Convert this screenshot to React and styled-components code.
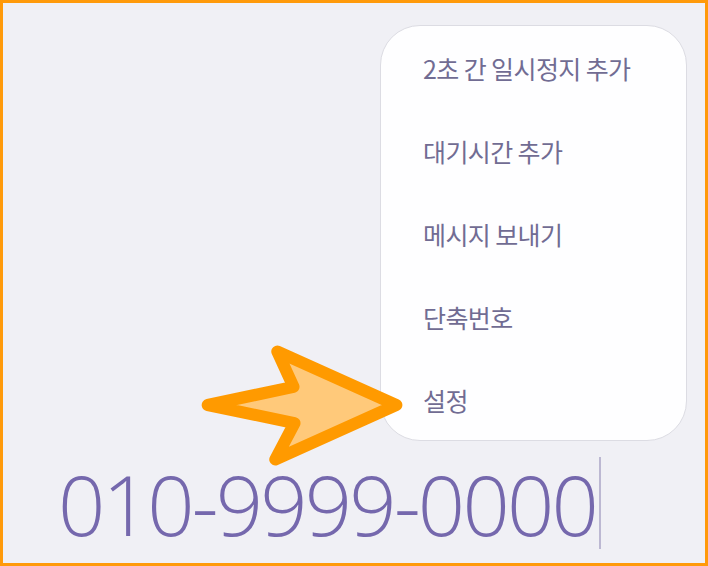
import styled, { createGlobalStyle } from "styled-components";

const Global = createGlobalStyle`
  html, body {
    margin: 0;
    padding: 0;
    background: #f0f0f5;
  }
  * {
    box-sizing: border-box;
  }
`;

const Screen = styled.div`
  position: relative;
  width: 708px;
  height: 566px;
  border: 3px solid #ff9a0a;
  background: #f0f0f5;
  display: flex;
  flex-direction: column;
  overflow: hidden;
`;

const Menu = styled.ul`
  align-self: flex-end;
  margin: 22px 18px 0 0;
  padding: 0;
  width: 307px;
  height: 416px;
  list-style: none;
  background: #fefeff;
  border: 1px solid #dcdce3;
  border-radius: 40px;
`;

const Item = styled.li`
  height: 83px;
  display: flex;
  align-items: center;
  padding-left: 42px;
  font-family: "Noto Sans CJK KR", "Noto Sans", sans-serif;
  font-size: 25px;
  letter-spacing: -0.6px;
  color: #716c93;
`;

const NumberRow = styled.div`
  display: flex;
  align-items: center;
  margin: 16px 0 0 55px;
`;

const Number = styled.span`
  font-family: "Open Sans", Roboto, sans-serif;
  font-weight: 340;
  font-size: 83px;
  letter-spacing: -2.8px;
  line-height: 1;
  color: #7568ad;
`;

const Cursor = styled.span`
  width: 2px;
  height: 92px;
  margin-left: 3px;
  background: #bcb8d2;
`;

const Pointer = styled.svg`
  position: absolute;
  left: 0;
  top: 0;
  pointer-events: none;
`;

const items = ["2초 간 일시정지 추가", "대기시간 추가", "메시지 보내기", "단축번호", "설정"];

function App() {
  return (
    <>
      <Global />
      <Screen>
        <Menu>
          {items.map((t) => (
            <Item key={t}>{t}</Item>
          ))}
        </Menu>
        <NumberRow>
          <Number>010-9999-0000</Number>
          <Cursor />
        </NumberRow>
        <Pointer width="708" height="566" viewBox="3 3 702 560">
          <polygon
            points="393,401 275,348 291,383 206,401 292,419 273,455"
            fill="#ffc97a"
            stroke="#ff9a00"
            strokeWidth="12"
            strokeLinejoin="round"
          />
        </Pointer>
      </Screen>
    </>
  );
}

export default App;
